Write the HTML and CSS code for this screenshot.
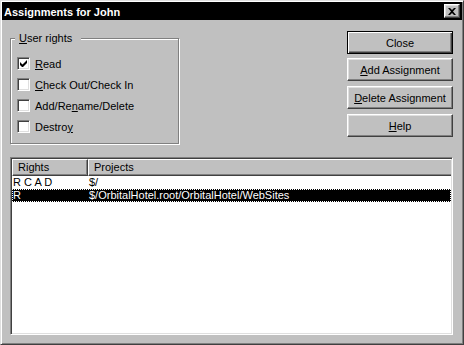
FILE: index.html
```html
<!DOCTYPE html>
<html lang="en">
<head>
  <meta charset="UTF-8" />
  <title>Assignments for John</title>
  <link rel="stylesheet" href="styles.css">
</head>
<body>

  <div class="window">
    <div class="titlebar">
      <span class="title">Assignments for John</span>
      <button class="close-x" aria-label="Close">
        <svg width="8" height="7" viewBox="0 0 8 7"><path d="M0 0h2l2 2 2-2h2L5 3.5 8 7H6L4 5 2 7H0l3-3.5z" fill="#000"/></svg>
      </button>
    </div>

    <div class="content">
      <div class="top-row">
        <div class="groupbox">
          <span class="group-label"><u>U</u>ser rights</span>
          <label class="check-row"><span class="checkbox"><svg width="7" height="7" viewBox="0 0 7 7"><path d="M0 2v3l2 2h1l4-4V0L2.5 4.5z" fill="#000"/></svg></span><span><u>R</u>ead</span></label>
          <label class="check-row"><span class="checkbox"></span><span><u>C</u>heck Out/Check In</span></label>
          <label class="check-row"><span class="checkbox"></span><span>Add/Re<u>n</u>ame/Delete</span></label>
          <label class="check-row"><span class="checkbox"></span><span>Destro<u>y</u></span></label>
        </div>

        <div class="buttons">
          <button class="btn default">Close</button>
          <button class="btn"><u>A</u>dd Assignment</button>
          <button class="btn"><u>D</u>elete Assignment</button>
          <button class="btn"><u>H</u>elp</button>
        </div>
      </div>

      <div class="listview">
        <div class="list-header">
          <span class="col-head rights">Rights</span>
          <span class="col-head projects">Projects</span>
        </div>
        <div class="list-row">
          <span class="cell rights">R C A D</span>
          <span class="cell">$/</span>
        </div>
        <div class="list-row selected">
          <span class="cell rights">R</span>
          <span class="cell">$/OrbitalHotel.root/OrbitalHotel/WebSites</span>
        </div>
      </div>
    </div>
  </div>

</body>
</html>
```

FILE: styles.css
```css
/* Reset & basics */
* {
  box-sizing: border-box;
}
body {
  margin: 0;
  background: #c0c0c0;
  font-family: 'Liberation Sans', Arial, sans-serif;
  font-size: 11px;
  color: #000;
}
u {
  text-decoration: underline;
  text-underline-offset: 1px;
}

/* Dialog frame */
.window {
  width: 464px;
  height: 345px;
  display: flex;
  flex-direction: column;
  padding: 1px;
  border: 1px solid;
  border-color: #dfdfdf #404040 #404040 #dfdfdf;
  box-shadow: inset 1px 1px 0 #fff, inset -1px -1px 0 #808080;
  background: #c0c0c0;
}

/* Title bar */
.titlebar {
  height: 18px;
  background: #000;
  color: #fff;
  display: flex;
  align-items: center;
  justify-content: space-between;
  padding: 0 2px 0 2px;
}
.title {
  font-weight: 700;
  font-size: 11px;
  padding-top: 1px;
}
.close-x {
  width: 16px;
  height: 14px;
  padding: 0;
  margin: 0;
  background: #c0c0c0;
  border: 1px solid;
  border-color: #fff #404040 #404040 #fff;
  box-shadow: inset -1px -1px 0 #808080, inset 1px 1px 0 #dfdfdf;
  display: flex;
  align-items: center;
  justify-content: center;
}

/* Body */
.content {
  flex: 1;
  display: flex;
  flex-direction: column;
  padding: 11px 9px 8px 8px;
}
.top-row {
  display: flex;
  justify-content: space-between;
  height: 126px;
  flex-shrink: 0;
}

/* Group box */
.groupbox {
  position: relative;
  margin-top: 7px;
  width: 169px;
  height: 106px;
  border: 1px solid #808080;
  box-shadow: 1px 1px 0 #fff, inset 1px 1px 0 #fff;
  padding: 18px 0 0 6px;
  display: flex;
  flex-direction: column;
  gap: 8px;
}
.group-label {
  position: absolute;
  top: -7px;
  left: 4px;
  background: #c0c0c0;
  padding: 0 9px 0 4px;
  line-height: 13px;
}
.check-row {
  display: flex;
  align-items: center;
  height: 13px;
  gap: 5px;
}
.checkbox {
  width: 13px;
  height: 13px;
  background: #fff;
  border: 1px solid;
  border-color: #808080 #fff #fff #808080;
  box-shadow: inset 1px 1px 0 #404040, inset -1px -1px 0 #dfdfdf;
  display: flex;
  align-items: center;
  justify-content: center;
}

/* Buttons */
.buttons {
  display: flex;
  flex-direction: column;
  gap: 5px;
  width: 106px;
}
.btn {
  height: 23px;
  margin: 0;
  padding: 0;
  font-family: inherit;
  font-size: 11px;
  color: #000;
  background: #c0c0c0;
  border: 1px solid;
  border-color: #fff #404040 #404040 #fff;
  box-shadow: inset -1px -1px 0 #808080, inset 1px 1px 0 #dfdfdf;
}
.btn.default {
  margin-bottom: -1px;
  border: 1px solid #000;
  box-shadow: inset 1px 1px 0 #fff, inset -1px -1px 0 #404040, inset -2px -2px 0 #808080;
}

/* List view */
.listview {
  flex: 1;
  background: #fff;
  border: 1px solid;
  border-color: #808080 #fff #fff #808080;
  box-shadow: inset 1px 1px 0 #404040, inset -1px -1px 0 #dfdfdf;
  padding: 1px;
}
.list-header {
  display: flex;
  height: 17px;
  background: #c0c0c0;
}
.col-head {
  height: 17px;
  line-height: 15px;
  padding-left: 5px;
  border: 1px solid;
  border-color: #fff #404040 #404040 #fff;
  box-shadow: inset -1px -1px 0 #808080;
}
.col-head.rights {
  width: 76px;
}
.col-head.projects {
  flex: 1;
  border-right: none;
  box-shadow: inset 0 -1px 0 #808080;
}
.list-row {
  display: flex;
  height: 13px;
  line-height: 13px;
}
.cell {
  padding-left: 1px;
  white-space: nowrap;
}
.cell.rights {
  width: 76px;
}
.list-row.selected {
  background: #000;
  color: #fff;
  outline: 1px dotted #fff;
  outline-offset: -1px;
}
```
